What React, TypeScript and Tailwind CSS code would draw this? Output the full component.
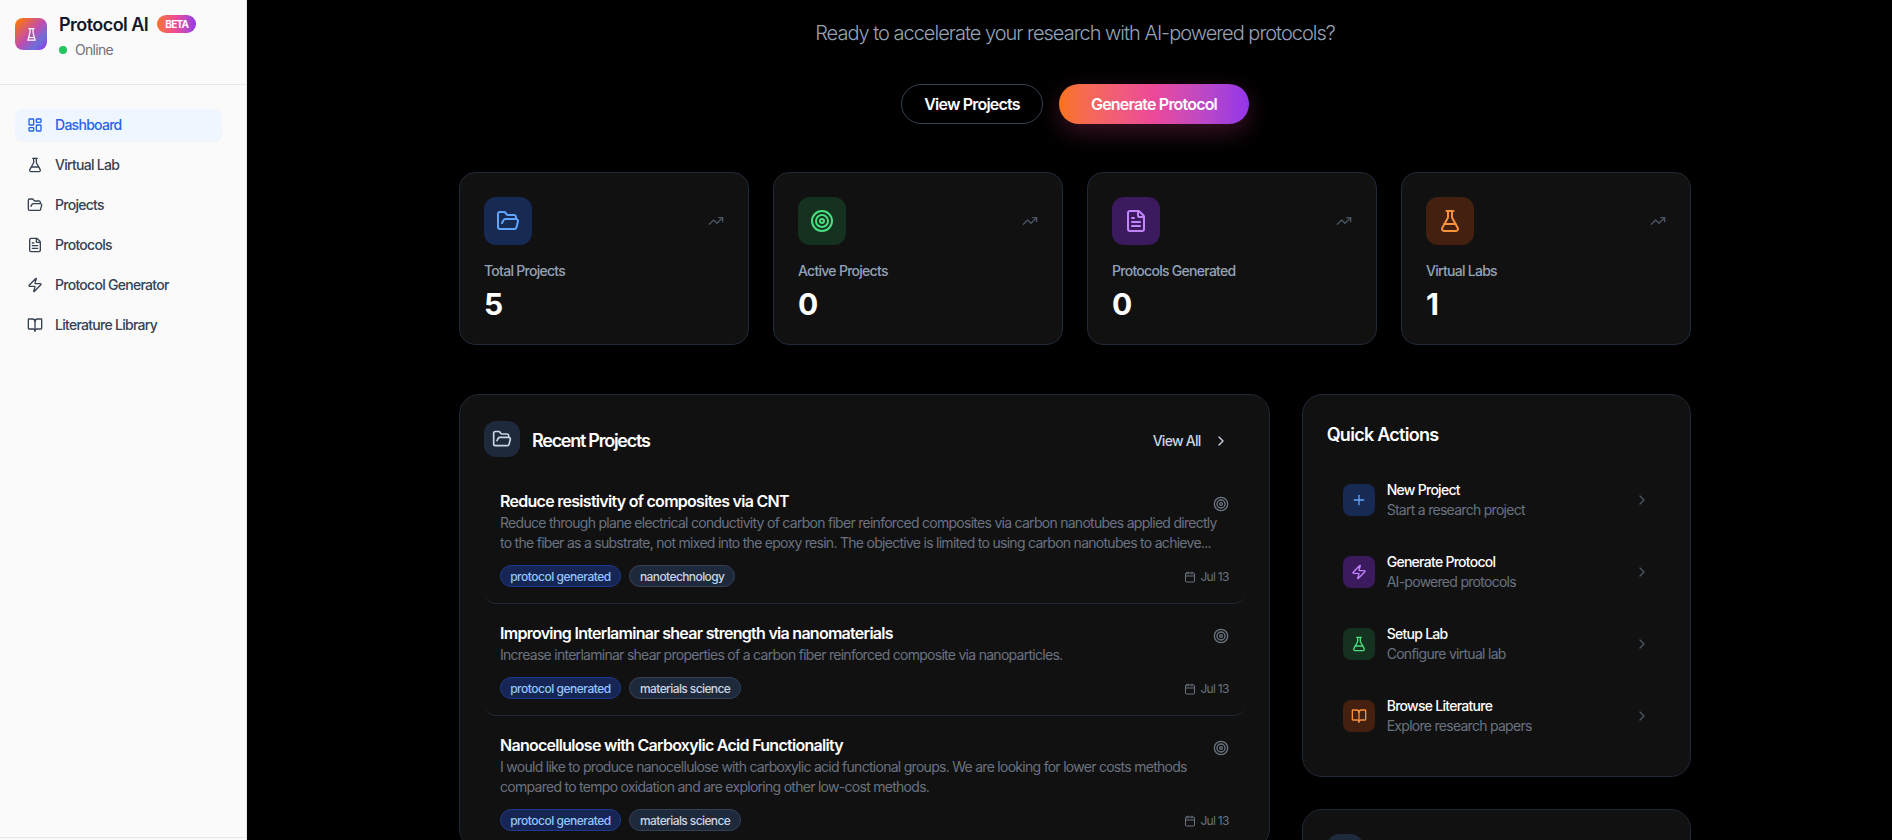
import {
  LayoutDashboard,
  FlaskConical,
  FolderOpen,
  FileText,
  Zap,
  BookOpen,
  Target,
  Calendar,
  ChevronRight,
  Plus,
  TrendingUp,
} from "lucide-react";

const navItems = [
  { label: "Dashboard", icon: LayoutDashboard, active: true },
  { label: "Virtual Lab", icon: FlaskConical },
  { label: "Projects", icon: FolderOpen },
  { label: "Protocols", icon: FileText },
  { label: "Protocol Generator", icon: Zap },
  { label: "Literature Library", icon: BookOpen },
];

const stats = [
  { label: "Total Projects", value: "5", icon: FolderOpen, box: "bg-[#172a54]", color: "text-[#60a5fa]" },
  { label: "Active Projects", value: "0", icon: Target, box: "bg-[#14321f]", color: "text-[#4ade80]" },
  { label: "Protocols Generated", value: "0", icon: FileText, box: "bg-[#3b1a5e]", color: "text-[#c084fc]" },
  { label: "Virtual Labs", value: "1", icon: FlaskConical, box: "bg-[#43200f]", color: "text-[#fb923c]" },
];

const projects = [
  {
    title: "Reduce resistivity of composites via CNT",
    description:
      "Reduce through plane electrical conductivity of carbon fiber reinforced composites via carbon nanotubes applied directly to the fiber as a substrate, not mixed into the epoxy resin. The objective is limited to using carbon nanotubes to achieve...",
    tag: "nanotechnology",
  },
  {
    title: "Improving Interlaminar shear strength via nanomaterials",
    description: "Increase interlaminar shear properties of a carbon fiber reinforced composite via nanoparticles.",
    tag: "materials science",
  },
  {
    title: "Nanocellulose with Carboxylic Acid Functionality",
    description:
      "I would like to produce nanocellulose with carboxylic acid functional groups. We are looking for lower costs methods compared to tempo oxidation and are exploring other low-cost methods.",
    tag: "materials science",
  },
];

const actions = [
  { title: "New Project", sub: "Start a research project", icon: Plus, box: "bg-[#172a54]", color: "text-[#60a5fa]" },
  { title: "Generate Protocol", sub: "AI-powered protocols", icon: Zap, box: "bg-[#3b1a5e]", color: "text-[#c084fc]" },
  { title: "Setup Lab", sub: "Configure virtual lab", icon: FlaskConical, box: "bg-[#14321f]", color: "text-[#4ade80]" },
  { title: "Browse Literature", sub: "Explore research papers", icon: BookOpen, box: "bg-[#43200f]", color: "text-[#fb923c]" },
];

function Sidebar() {
  return (
    <aside className="w-[247px] shrink-0 h-[840px] flex flex-col bg-[#fafafa] border-r border-[#e5e7eb]">
      <div className="h-[85px] shrink-0 border-b border-[#e5e7eb] pl-[15px] pt-[18px] flex gap-3">
        <div className="w-8 h-8 rounded-lg bg-[linear-gradient(135deg,#f97316_10%,#c04cb0_50%,#6d6fd8_75%,#9333ea_100%)] flex items-center justify-center">
          <svg width="9" height="13" viewBox="0 0 9 13" fill="none" stroke="white" strokeWidth="1.2">
            <path d="M1.5 0.7h6M3 0.7v3.6L0.9 12.2h7.2L6 4.3V0.7" />
            <path d="M2 9.5h5" />
          </svg>
        </div>
        <div className="-mt-[8px]">
          <div className="flex items-center gap-[9px] h-6 mt-[2px]">
            <span className="text-[18px] font-semibold text-[#111827] tracking-[-0.03em]">Protocol AI</span>
            <span className="h-[18px] w-[39px] rounded-full bg-gradient-to-r from-[#f97316] via-[#ec4899] to-[#9333ea] text-white text-[10px] font-bold flex items-center justify-center">BETA</span>
          </div>
          <div className="flex items-center gap-2 mt-1">
            <span className="w-2 h-2 rounded-full bg-[#22c55e]" />
            <span className="text-sm text-[#6b7280]">Online</span>
          </div>
        </div>
      </div>
      <nav className="flex flex-col gap-2 px-[15px] pt-6 w-[237px]">
        {navItems.map((item) => (
          <div
            key={item.label}
            className={`h-8 rounded-lg pl-3 flex items-center gap-3 text-sm font-medium ${
              item.active ? "bg-[#eff6ff] text-[#2563eb] shadow-[0_1px_2px_rgba(0,0,0,0.04)]" : "text-[#374151]"
            }`}
          >
            <item.icon size={16} />
            {item.label}
          </div>
        ))}
      </nav>
      <div className="mt-auto mb-[2px] border-t border-[#e5e7eb]" />
    </aside>
  );
}

function Stat({ s }: { s: (typeof stats)[number] }) {
  return (
    <div className="h-[173px] rounded-2xl border border-[#1f2937] bg-[#111111] p-6">
      <div className="flex items-center justify-between">
        <div className={`w-12 h-12 rounded-xl flex items-center justify-center ${s.box}`}>
          <s.icon size={24} className={s.color} />
        </div>
        <TrendingUp size={16} className="text-[#4b5563]" />
      </div>
      <div className="mt-4 text-sm font-medium text-[#94a3b8]">{s.label}</div>
      <div className="mt-[5px] text-3xl font-bold text-white">{s.value}</div>
    </div>
  );
}

function ProjectRow({ p }: { p: (typeof projects)[number] }) {
  return (
    <div className="px-4 pt-[17px] pb-4 rounded-xl border-b border-[#1f2937]">
      <div className="flex justify-between gap-4">
        <div className="text-base font-semibold text-white">{p.title}</div>
        <Target size={16} className="text-[#6b7280] shrink-0 mt-[7px]" />
      </div>
      <p className="text-sm text-[#6b7280] line-clamp-2">{p.description}</p>
      <div className="flex items-center mt-3">
        <div className="flex gap-2 flex-1">
          <span className="h-[22px] w-[121px] pt-px flex items-center justify-center rounded-full border border-[#1e3a8a] bg-[#172554] text-xs font-medium tracking-[-0.04em] text-[#93c5fd]">protocol generated</span>
          <span className="h-[22px] px-2.5 pt-px flex items-center rounded-full border border-[#334155] bg-[#1e293b] text-xs font-medium tracking-[-0.05em] text-[#cbd5e1]">{p.tag}</span>
        </div>
        <div className="flex items-center gap-1 pt-px text-xs text-[#6b7280]">
          <Calendar size={12} />
          Jul 13
        </div>
      </div>
    </div>
  );
}

export default function App() {
  return (
    <div className="h-[840px] w-[1892px] overflow-hidden flex bg-black font-['Inter',sans-serif] tracking-[-0.045em]">
      <Sidebar />
      <main className="flex-1 overflow-hidden pl-[212px]">
        <div className="w-[1232px]">
          <p className="pt-[19px] text-center text-xl font-light tracking-[-0.05em] text-[#94a3b8] h-[84px]">
            Ready to accelerate your research with AI-powered protocols?
          </p>
          <div className="flex justify-center gap-4">
            <button className="h-10 w-[142px] rounded-full border border-[#334155] text-base font-semibold tracking-[-0.05em] text-white">View Projects</button>
            <button className="h-10 w-[190px] rounded-full bg-gradient-to-r from-[#f97316] via-[#ec4899] to-[#9333ea] text-base font-semibold tracking-[-0.05em] text-white shadow-[0_8px_24px_rgba(236,72,153,0.25)]">Generate Protocol</button>
          </div>
          <div className="grid grid-cols-4 gap-6 mt-12">
            {stats.map((s) => (
              <Stat key={s.label} s={s} />
            ))}
          </div>
          <div className="grid grid-cols-3 gap-8 mt-[49px] items-start">
            <section className="col-span-2 rounded-[20px] border border-[#1f2937] bg-[#111111] px-6 pt-[26px]">
              <div className="flex items-center justify-between mb-[15px]">
                <div className="flex items-center gap-3">
                  <div className="w-9 h-9 rounded-xl bg-[#1e293b] flex items-center justify-center">
                    <FolderOpen size={20} className="text-[#cbd5e1]" />
                  </div>
                  <h2 className="text-lg font-semibold text-white pt-[3px] tracking-[-0.07em]">Recent Projects</h2>
                </div>
                <button className="flex items-center gap-3 pr-4 pt-[3px] text-sm font-medium text-[#cbd5e1]">
                  View All
                  <ChevronRight size={16} />
                </button>
              </div>
              {projects.map((p) => (
                <ProjectRow key={p.title} p={p} />
              ))}
            </section>
            <div className="flex flex-col gap-8">
              <section className="rounded-[20px] border border-[#1f2937] bg-[#111111] px-6 pt-[26px] pb-6">
                <h2 className="text-lg font-semibold text-white mb-[15px]">Quick Actions</h2>
                {actions.map((a) => (
                  <div key={a.title} className="p-4 flex items-center gap-3">
                    <div className={`w-8 h-8 rounded-lg flex items-center justify-center ${a.box}`}>
                      <a.icon size={16} className={a.color} />
                    </div>
                    <div className="flex-1">
                      <div className="text-sm font-medium text-white">{a.title}</div>
                      <div className="text-sm text-[#6b7280]">{a.sub}</div>
                    </div>
                    <ChevronRight size={16} className="text-[#4b5563]" />
                  </div>
                ))}
              </section>
              <section className="h-[200px] rounded-[20px] border border-[#1f2937] bg-[#111111] px-6 pt-6">
                <div className="w-9 h-9 rounded-xl bg-[#1e293b]" />
              </section>
            </div>
          </div>
        </div>
      </main>
    </div>
  );
}
